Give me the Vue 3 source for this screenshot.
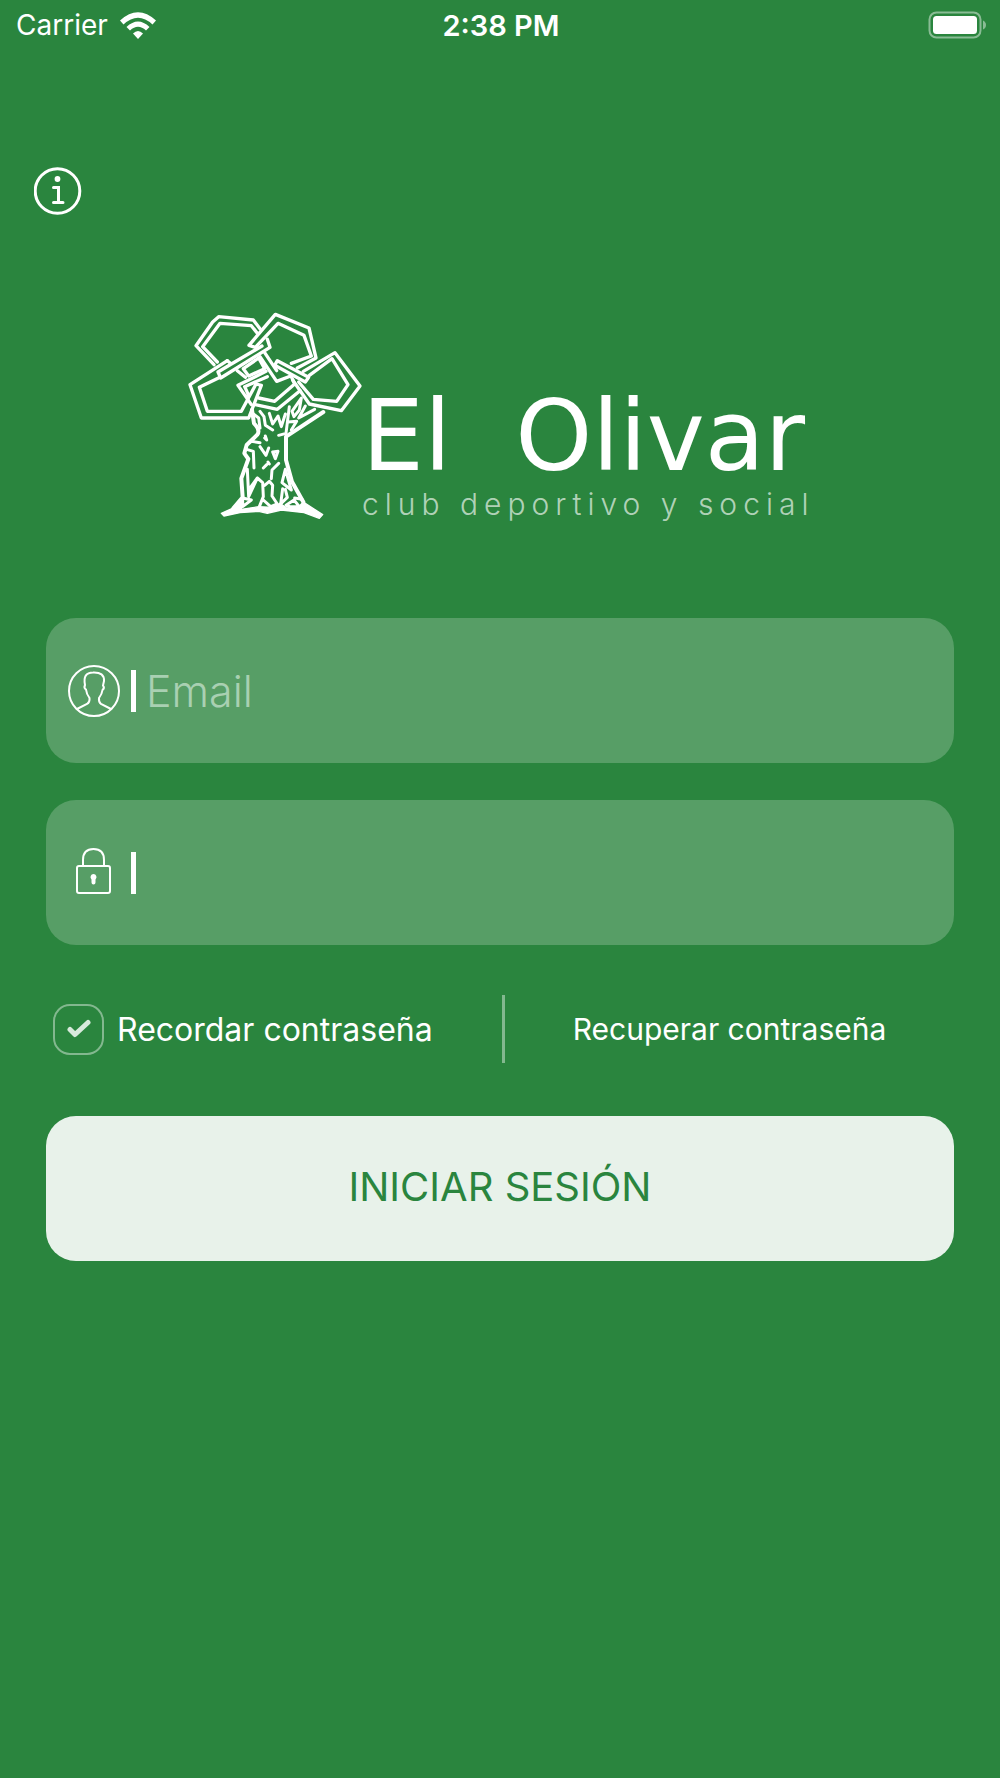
<template>
  <main class="screen">
    <header class="status-bar">
      <div class="carrier">
        <span>Carrier</span>
        <svg class="wifi" viewBox="0 0 36 27" aria-hidden="true">
          <path d="M0 8.500Q18 -8 36 8.500L32.500 12.500Q18 -1 3.500 12.500Z" />
          <path d="M6.500 15Q18 4 29.500 15L26 18.500Q18 11 10 18.500Z" />
          <path d="M13 21.500Q18 16.500 23 21.500L18 27Z" />
        </svg>
      </div>
      <time class="clock">2:38 PM</time>
      <svg class="battery" viewBox="0 0 58 28" aria-hidden="true">
        <rect x="1.500" y="1.500" width="51" height="25" rx="7" />
        <rect class="level" x="5" y="5" width="44" height="18" rx="3.500" />
        <path d="M55 9.500Q58 11 58 14T55 18.500Z" />
      </svg>
    </header>

    <button class="info" type="button" aria-label="Información">
      <svg viewBox="0 0 48 48" aria-hidden="true">
        <circle cx="23.500" cy="24" r="22.300" />
        <circle class="dot" cx="23.500" cy="12" r="2.900" />
        <path d="M19.500 20.500H24.500V35.500M19.500 35.500H29" />
      </svg>
    </button>

    <section class="brand">
      <svg class="tree" viewBox="0 0 570 690" aria-hidden="true">
        <g class="leaves">
          <path d="M102 194L48 137L98 66L116 50L220 60L240 86M112 186L68 140L120 70L214 77L232 100" />
          <path d="M207 136L286 43L387 84L408 174L352 204M207 136L226 142L294 70L372 106L394 168L334 190" />
          <path d="M142 182L30 254L64 354L206 354L244 256L228 252L184 334L82 334L58 262L120 232" />
          <path d="M142 182L154 192L114 216L122 234L270 142L262 118M154 192L246 138" />
          <path d="M190 206L236 174L254 206L206 228ZM172 212L196 232" />
          <path d="M240 170L290 244L332 228M254 158L290 212" />
          <path d="M292 182L386 232L376 246L284 196ZM370 214L465 158L540 258L484 332L388 312L338 240" />
          <path d="M388 226L456 176L504 254L470 304L400 298L356 246" />
          <path d="M258 214L174 256L214 314M262 230L194 260L206 286" />
          <path d="M226 314L292 328L360 272M236 294L284 304L344 252L334 230" />
        </g>
        <path class="trunk" d="M216 330L222 370Q242 390 232 404L200 435L193 460L205 477L184 535L188 592L160 625M370 606L336 545L318 480L318 410L430 336" />
        <g class="bark">
          <path d="M218 340L236 354L240 384M240 334L252 350L256 376L278 390M268 340L278 372L294 348L304 380L316 342M328 320L318 400L296 406" />
          <path d="M364 294L336 334L342 350L358 330ZM376 318L356 354L404 328M324 366L350 364L334 390" />
          <path d="M200 448L220 454L222 504M214 424L240 428M240 440L258 466L266 444M256 408L260 420L254 414M278 456L294 454L286 476ZM250 504L260 494M264 486L268 492M296 490L276 510L274 536" />
          <path d="M202 508L206 590L232 534L248 548L250 590L238 620M254 556L268 544L278 556L276 588L292 612L272 620L250 600M232 534L206 570" />
          <path d="M316 508L306 548L334 570L316 508M308 566L302 612L322 592L316 568M318 616L342 600L358 620L330 620ZM344 594L366 598M188 594L214 600L188 620Z" />
        </g>
        <path class="roots" d="M124 640L164 622L188 600L184 628L236 620L280 622L300 610L320 624L356 620L370 606L428 644L418 655L372 638L304 630L262 640L236 634L180 638L132 648Z" />
      </svg>
      <div class="wordmark">
        <h1 class="name"><span>El</span> <span>Olivar</span></h1>
        <p class="tagline">club deportivo y social</p>
      </div>
    </section>

    <form class="login" @submit.prevent>
      <label class="field">
        <svg class="field-icon" viewBox="0 0 54 54" aria-hidden="true">
          <circle cx="27" cy="27" r="25" />
          <path d="M10 45L20 40Q23 38 22.500 34Q19.500 30 19 25.500Q16.500 24 18 21Q15.500 8.500 26 8.500Q37.500 8 37 17L36 21.500Q38 24 35.500 26Q35 30 32 34Q31.500 38 34 40L44 45" />
        </svg>
        <i class="bar"></i>
        <input v-model="email" type="email" placeholder="Email" aria-label="Email" />
      </label>

      <label class="field">
        <svg class="field-icon" viewBox="0 0 54 54" aria-hidden="true">
          <rect x="10" y="20" width="33" height="27" rx="2" />
          <path d="M16 20V14Q16 3 26.500 3T37 14V20" />
          <path class="keyhole" d="M26.500 28A3.200 3.200 0 0 1 28.500 33.500V36.500Q28.500 38.500 26.500 38.500T24.500 36.500V33.500A3.200 3.200 0 0 1 26.500 28Z" />
        </svg>
        <i class="bar"></i>
        <input v-model="password" type="password" aria-label="Contraseña" />
      </label>

      <div class="options">
        <label class="remember">
          <span class="check">
            <input v-model="remember" type="checkbox" />
            <svg v-if="remember" viewBox="0 0 24 20" aria-hidden="true">
              <path d="M3 10.500L8 15.500L21 3.500" />
            </svg>
          </span>
          Recordar contraseña
        </label>
        <a class="recover" href="#">Recuperar contraseña</a>
      </div>

      <button class="submit" type="submit">INICIAR SESIÓN</button>
    </form>
  </main>
</template>

<script setup>
import { ref } from 'vue'

const email = ref('')
const password = ref('')
const remember = ref(true)
</script>

<style>
body {
  margin: 0;
  background: #2a853e;
}
</style>

<style scoped>
.screen {
  min-height: 100vh;
  background: #2a853e;
  color: #fff;
  font-family: Inter, "Open Sans", sans-serif;
}

svg {
  display: block;
}

.status-bar {
  display: grid;
  grid-template-columns: 1fr auto 1fr;
  align-items: center;
  height: 50px;
  padding: 0 14px 0 16px;
  font-size: 28px;
}

.carrier {
  display: flex;
  align-items: center;
  gap: 12px;
}

.wifi {
  width: 36px;
  height: 27px;
  fill: #fff;
}

.clock {
  font-size: 29px;
  font-weight: 600;
}

.battery {
  justify-self: end;
  width: 58px;
  height: 28px;
  fill: rgba(255, 255, 255, 0.45);
}

.battery rect {
  fill: none;
  stroke: rgba(255, 255, 255, 0.45);
  stroke-width: 2;
}

.battery .level {
  fill: #fff;
  stroke: none;
}

.info {
  display: block;
  margin: 117px 0 0 34px;
  padding: 0;
  border: 0;
  background: none;
  cursor: pointer;
}

.info svg {
  width: 48px;
  height: 48px;
  fill: none;
  stroke: #fff;
  stroke-width: 3;
  stroke-linecap: round;
}

.info .dot {
  fill: #fff;
  stroke: none;
}

.brand {
  display: flex;
  justify-content: center;
  padding: 85px 0 88px;
}

.tree {
  flex: none;
  width: 190px;
  height: 230px;
  fill: none;
  stroke: #fff;
  stroke-linejoin: round;
  stroke-linecap: round;
}

.leaves {
  stroke-width: 10;
}

.trunk {
  stroke-width: 12;
}

.bark {
  stroke-width: 9;
}

.roots {
  fill: #fff;
  stroke-width: 4;
}

.wordmark {
  width: 458px;
  margin-left: -8px;
  padding-top: 84px;
}

.name {
  display: flex;
  gap: 64px;
  margin: 0;
  font-family: "DejaVu Sans", sans-serif;
  font-size: 98px;
  font-weight: 400;
  line-height: 104px;
  white-space: nowrap;
}

.tagline {
  margin: 0;
  color: rgba(255, 255, 255, 0.65);
  font-size: 30px;
  font-weight: 300;
  letter-spacing: 6px;
  line-height: 32px;
  white-space: nowrap;
}

.login {
  padding: 0 46px;
}

.field {
  display: flex;
  align-items: center;
  height: 145px;
  margin-bottom: 37px;
  padding: 0 21px;
  border-radius: 30px;
  background: #579e66;
  box-sizing: border-box;
}

.field-icon {
  flex: none;
  width: 54px;
  height: 54px;
  fill: none;
  stroke: #fff;
  stroke-width: 2;
}

.field-icon .keyhole {
  fill: #fff;
  stroke: none;
}

.bar {
  flex: none;
  width: 5px;
  height: 42px;
  margin: 0 10px;
  background: #fff;
}

.field input {
  flex: 1;
  min-width: 0;
  padding: 0;
  border: 0;
  outline: none;
  background: none;
  color: #fff;
  font: 300 43px Inter, sans-serif;
}

.field input::placeholder {
  color: #a9d0b2;
  opacity: 1;
}

.options {
  display: flex;
  align-items: center;
  margin-top: 50px;
}

.remember {
  flex: 1;
  display: flex;
  align-items: center;
  gap: 13px;
  height: 68px;
  padding-left: 7px;
  border-right: 3px solid rgba(255, 255, 255, 0.42);
  font-size: 32px;
}

.check {
  display: grid;
  place-items: center;
  width: 51px;
  height: 51px;
}

.check input {
  grid-area: 1 / 1;
  appearance: none;
  width: 51px;
  height: 51px;
  margin: 0;
  border: 2px solid rgba(255, 255, 255, 0.42);
  border-radius: 17px;
}

.check svg {
  grid-area: 1 / 1;
  width: 24px;
  height: 20px;
  fill: none;
  stroke: #d8eadc;
  stroke-width: 5;
  stroke-linecap: round;
  stroke-linejoin: round;
  pointer-events: none;
}

.recover {
  flex: 1;
  color: #fff;
  font-size: 30px;
  text-align: center;
  text-decoration: none;
}

.submit {
  display: block;
  width: 100%;
  height: 145px;
  margin-top: 53px;
  padding: 0 0 4px;
  border: 0;
  border-radius: 30px;
  background: #e8f2ea;
  color: #2a853e;
  font: 400 40px Inter, sans-serif;
  cursor: pointer;
}
</style>
